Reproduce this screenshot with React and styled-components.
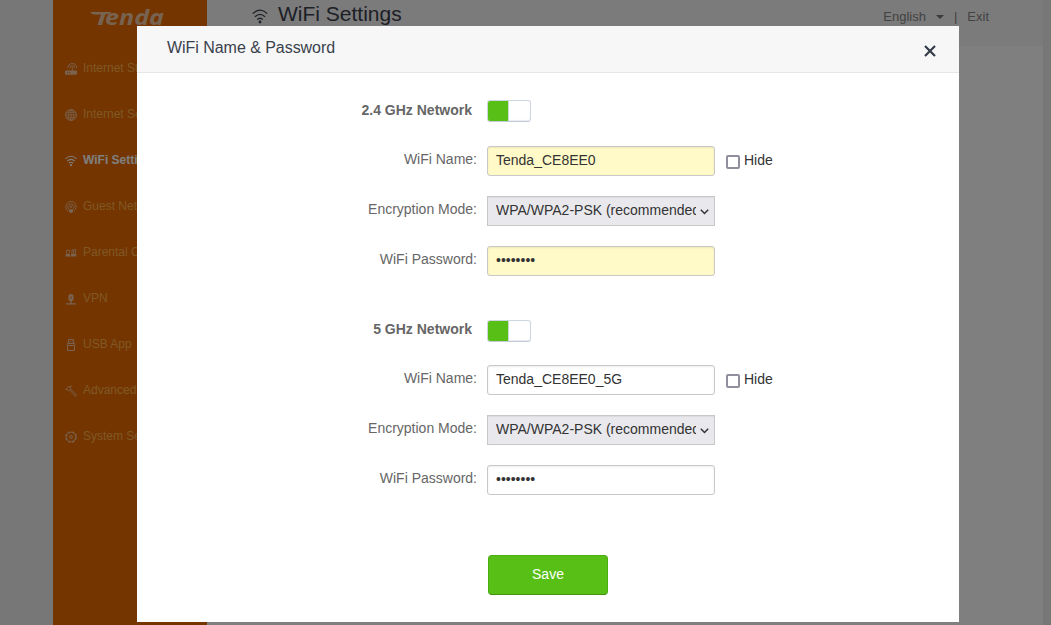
import React from "react";
import styled, { createGlobalStyle, css } from "styled-components";

const GlobalStyle = createGlobalStyle`
  * { box-sizing: border-box; }
  html, body { margin: 0; height: 100%; overflow: hidden; }
  body {
    background: #f5f5f5;
    color: #333;
    font-family: "Liberation Sans", Arial, sans-serif;
    font-size: 14px;
  }
`;

const Page = styled.div`
  display: flex;
  height: 625px;
  padding: 0 8px 0 53px;
  background: #eee;
`;

const Sidebar = styled.nav`
  flex: 0 0 154px;
  background: #e86a00;
`;

const LogoBox = styled.div`
  height: 45px;
  padding: 7px 0 0 35px;
  svg { display: block; }
`;

const NavItem = styled.a`
  display: flex;
  align-items: center;
  height: 46px;
  padding-left: 12px;
  gap: 6px;
  white-space: nowrap;
  overflow: hidden;
  font-size: 12px;
  line-height: 16px;
  color: ${(p) => (p.$active ? "#fff" : "#ffb04c")};
  font-weight: ${(p) => (p.$active ? "bold" : "normal")};
  svg { flex: none; position: relative; top: 1px; color: ${(p) => (p.$active ? "#fff" : "#f5c49c")}; }
`;

const Main = styled.main`
  flex: 1;
  background: #fff;
`;

const TopBar = styled.header`
  display: flex;
  justify-content: space-between;
  height: 46px;
  padding: 0 54px 0 45px;
  background: #f6f6f6;
`;

const PageTitle = styled.h1`
  display: flex;
  gap: 10px;
  margin: 0;
  font-size: 21px;
  line-height: 28px;
  font-weight: normal;
  color: #3a414c;
  svg { margin-top: 9px; }
`;

const TopLinks = styled.div`
  display: flex;
  font-size: 13px;
  line-height: 33px;
  color: #878787;
`;

const Caret = styled.i`
  margin: 15px 10px 0 10px;
  width: 8px;
  height: 4px;
  border: 4px solid transparent;
  border-top-color: #777;
  border-bottom: 0;
`;

const Divider = styled.span`
  margin-right: 10px;
`;

const Overlay = styled.div`
  position: fixed;
  inset: 0;
  padding: 26px 0 0 137px;
  background: rgba(0, 0, 0, 0.5);
`;

const Dialog = styled.section`
  width: 822px;
  height: 596px;
  background: #fff;
`;

const DialogHeader = styled.header`
  display: flex;
  justify-content: space-between;
  height: 47px;
  padding: 0 23px 0 30px;
  border-bottom: 1px solid #e6e6e6;
  background: #f7f7f7;
  color: #3a414c;
  font-size: 16px;
  line-height: 43px;
  letter-spacing: -0.04px;
  svg { margin-top: 19px; }
`;

const Form = styled.form`
  display: flex;
  flex-direction: column;
  padding-top: 23px;
`;

const Group = styled.div`
  display: flex;
  flex-direction: column;
  gap: 20px;
  margin-bottom: ${(p) => p.$after}px;
`;

const Row = styled.div`
  display: flex;
  height: 30px;
`;

const Label = styled.label`
  width: 350px;
  padding-right: ${(p) => (p.$heading ? 15 : 10)}px;
  text-align: right;
  line-height: ${(p) => (p.$heading ? 28 : 26)}px;
  color: #666;
  font-weight: ${(p) => (p.$heading ? "bold" : "normal")};
`;

const Toggle = styled.span`
  display: flex;
  width: 44px;
  height: 22px;
  margin-top: ${(p) => p.$top}px;
  border: 1px solid #d0d6e0;
  border-bottom-color: #c3cad6;
  border-radius: 3px;
  background: #fff;
  box-shadow: inset 0 -1px 1px #e6eaf0;
  overflow: hidden;
  &::before {
    content: "";
    width: 21px;
    margin: -1px 0 0 -1px;
    height: 22px;
    background: #58bf16;
    box-shadow: 1px 0 0 #c9d8d4;
  }
`;

const fieldBox = css`
  width: 228px;
  height: 30px;
  border: 1px solid #c8c8c8;
  color: #333;
  font: 14px/28px "Liberation Sans", Arial, sans-serif;
`;

const Input = styled.input`
  ${fieldBox}
  padding: 0 8px 2px;
  border-radius: 3px;
  background: ${(p) => (p.$filled ? "#fffac7" : "#fff")};
  box-shadow: inset 0 1px 2px rgba(0, 0, 0, 0.08);
  outline: none;
`;

const Select = styled.div`
  ${fieldBox}
  display: flex;
  padding: 0 4px 0 8px;
  background: #e9e9ed;
  box-shadow: inset 0 1px 1px rgba(0, 0, 0, 0.06);
  svg { flex: none; margin: 11px 0 0 3px; }
`;

const SelectText = styled.span`
  width: 200px;
  overflow: hidden;
  white-space: nowrap;
  line-height: 27px;
`;

const Hide = styled.label`
  display: flex;
  margin-left: 11px;
  gap: 4px;
  line-height: 28px;
`;

const CheckBox = styled.input`
  appearance: none;
  width: 14px;
  height: 14px;
  margin: 9px 0 0;
  border: 2px solid #8f8f9d;
  border-radius: 2px;
  background: #fff;
`;

const SaveButton = styled.button`
  width: 120px;
  height: 40px;
  margin-left: 351px;
  padding: 0 0 2px;
  border: 1px solid #4bad10;
  border-bottom-color: #3f920c;
  border-radius: 4px;
  background: #58bf16;
  color: #fff;
  font: 14px "Liberation Sans", Arial, sans-serif;
`;

const Icon = ({ size = 12, children }) => (
  <svg width={size} height={size} viewBox="0 0 12 12" fill="none" stroke="currentColor" strokeWidth="1">
    {children}
  </svg>
);

const WifiIcon = ({ width = 12, height = 12, stroke = 1.2 }) => (
  <svg width={width} height={height} viewBox="0 0 16 15" fill="none" stroke="currentColor" strokeWidth={stroke}>
    <path d="M.7 4.6Q8-2.4 15.3 4.6M3 7.7Q8 3 13 7.7M5.2 10.5Q8 7.9 10.8 10.5" />
    <circle cx="8" cy="13" r="1.4" fill="currentColor" stroke="none" />
  </svg>
);

const Logo = () => (
  <svg width="80" height="22" viewBox="0 0 80 22" fill="#f0c6a2"
    fontFamily="Open Sans, Liberation Sans, sans-serif" fontWeight="bold" fontStyle="italic">
    <path d="M2.4 5H12l-.6 2.6H6.5Q3.5 7.6 2.4 5z" />
    <text x="6" y="18" fontSize="18.2" textLength="15" lengthAdjust="spacingAndGlyphs">T</text>
    <text x="17" y="18" fontSize="20.5" textLength="59" lengthAdjust="spacingAndGlyphs">enda</text>
  </svg>
);

const navItems = [
  ["Internet Status", <Icon>
    <rect x="0" y="7.6" width="12" height="4.2" rx=".8" fill="currentColor" stroke="none" />
    <path d="M7.3 8V4.2M3 5Q3 .6 7.3 .6T11.5 5M5 5.2Q5 2.6 7.3 2.6T9.6 5.2" />
    <path d="M2 9.8h1M4 9.8h1" stroke="#e86a00" />
  </Icon>],
  ["Internet Settings", <Icon>
    <circle cx="6" cy="6" r="5.4" />
    <ellipse cx="6" cy="6" rx="2.6" ry="5.4" strokeWidth=".8" />
    <path d="M6 .6v10.8M.6 6h10.8M1.5 3.3h9M1.5 8.7h9" strokeWidth=".8" />
  </Icon>],
  ["WiFi Settings", <WifiIcon stroke={1.4} />],
  ["Guest Network", <Icon>
    <path d="M3.3 10.2A5.2 5.2 0 1 1 8.7 10.2M3.6 8A3.1 3.1 0 1 1 8.4 8" strokeWidth=".9" />
    <circle cx="6" cy="5.8" r="1" strokeWidth=".8" />
    <path d="M4 8.3h4v2L7 12H5l-1-1.7z" fill="currentColor" stroke="none" />
  </Icon>],
  ["Parental Controls", <Icon>
    <path d="M.7 6.7h3.8l1.3 2.8H.7zM6 6.7h5.3v2.8H6z" fill="currentColor" stroke="none" />
    <path d="M1.7 6.5V3.2h3v3M7 6.5V3h1M8.7 6.5V2.5h1.8v4" strokeWidth=".9" />
  </Icon>],
  ["VPN", <Icon>
    <path d="M3.4 3.6a2.6 2.6 0 0 1 5.2 0V6q0 2.2-2.6 2.2T3.4 6z" fill="currentColor" stroke="none" />
    <path d="M6 8v2.5M1 10.9h10" strokeWidth="1.4" />
    <path d="M6 3.6v2" stroke="#e86a00" />
  </Icon>],
  ["USB App", <Icon>
    <path d="M3.5 4.5v-4h5v4M2.3 6V4.5h7.4V6M2.5 6.5h7v5h-7zM4.5 2.5h1M6.5 2.5h1" />
  </Icon>],
  ["Advanced", <Icon>
    <path d="M.6 4.6Q2.3 1.2 6.3 1.2L5 2.8 5.8 4 3.8 6 2.5 4.8zM5 5.2l5.2 6 1.3-1.3L6 4.3" strokeWidth=".9" />
  </Icon>],
  ["System Settings", <Icon>
    <circle cx="6" cy="6" r="5.2" strokeWidth="1.3" strokeDasharray="2.9 1.18" />
    <circle cx="6" cy="6" r="4.5" strokeWidth=".6" />
    <circle cx="6" cy="6" r="1.4" />
  </Icon>],
];

function Network({ name, ssid, filled, toggleTop, after }) {
  return (
    <Group $after={after}>
      <Row>
        <Label $heading>{name}</Label>
        <Toggle $top={toggleTop} />
      </Row>
      <Row>
        <Label>WiFi Name:</Label>
        <Input $filled={filled} defaultValue={ssid} />
        <Hide><CheckBox type="checkbox" />Hide</Hide>
      </Row>
      <Row>
        <Label>Encryption Mode:</Label>
        <Select>
          <SelectText>WPA/WPA2-PSK (recommended)</SelectText>
          <svg width="11" height="8" viewBox="0 0 11 8" fill="none" stroke="#333" strokeWidth="1.5">
            <path d="M1.8 1.8l3.7 3.7 3.7-3.7" />
          </svg>
        </Select>
      </Row>
      <Row>
        <Label>WiFi Password:</Label>
        <Input $filled={filled} defaultValue="••••••••" />
      </Row>
    </Group>
  );
}

export default function App() {
  return (
    <>
      <GlobalStyle />
      <Page>
        <Sidebar>
          <LogoBox><Logo /></LogoBox>
          {navItems.map(([text, icon]) => (
            <NavItem key={text} $active={text === "WiFi Settings"}>{icon}{text}</NavItem>
          ))}
        </Sidebar>
        <Main>
          <TopBar>
            <PageTitle><WifiIcon width={16} height={15} stroke={1.3} />WiFi Settings</PageTitle>
            <TopLinks>English<Caret /><Divider>|</Divider>Exit</TopLinks>
          </TopBar>
        </Main>
      </Page>
      <Overlay>
        <Dialog>
          <DialogHeader>
            WiFi Name &amp; Password
            <svg width="12" height="12" viewBox="0 0 12 12" stroke="#343c49" strokeWidth="2.2">
              <path d="M1 1l10 10M11 1L1 11" />
            </svg>
          </DialogHeader>
          <Form>
            <Network name="2.4 GHz Network" ssid="Tenda_CE8EE0" filled toggleTop={4} after={39} />
            <Network name="5 GHz Network" ssid="Tenda_CE8EE0_5G" toggleTop={5} after={60} />
            <SaveButton type="button">Save</SaveButton>
          </Form>
        </Dialog>
      </Overlay>
    </>
  );
}
